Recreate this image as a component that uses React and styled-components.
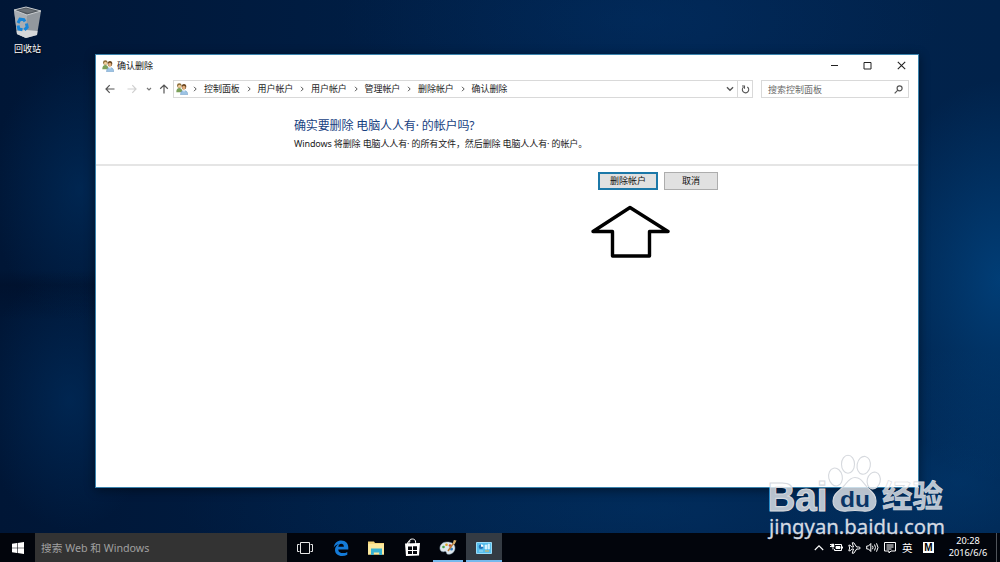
import React from "react";
import styled, { createGlobalStyle } from "styled-components";

const GlobalStyle = createGlobalStyle`
  * {
    box-sizing: border-box;
  }

  body {
    margin: 0;
    overflow: hidden;
    font-family: "Noto Sans", "Noto Sans CJK SC", sans-serif;
    font-size: 9px;
  }

  svg {
    display: block;
    flex: none;
  }
`;

const Screen = styled.div`
  position: relative;
  width: 1000px;
  height: 562px;
  display: flex;
  flex-direction: column;
  overflow: hidden;
  background:
    linear-gradient(180deg, transparent 270px, rgba(0, 8, 28, 0.3) 285px, transparent 320px) 0 0 / 95px 100% no-repeat,
    radial-gradient(ellipse 130px 200px at 1000px 280px, rgba(0, 84, 154, 0.55), transparent),
    radial-gradient(ellipse 200px 130px at 960px 480px, rgba(0, 66, 126, 0.45), transparent),
    radial-gradient(ellipse 460px 90px at 640px 510px, rgba(0, 58, 112, 0.4), transparent),
    radial-gradient(ellipse 300px 110px at 640px 20px, rgba(0, 52, 108, 0.4), transparent),
    radial-gradient(ellipse 90px 130px at 80px 190px, rgba(0, 52, 104, 0.5), transparent),
    radial-gradient(ellipse 90px 130px at 70px 400px, rgba(0, 52, 105, 0.5), transparent),
    linear-gradient(90deg, #001636 0%, #001c41 30%, #01234e 70%, #01224a 100%);
`;

const Desktop = styled.main`
  flex: 1;
  display: flex;
  align-items: flex-start;
`;

const DesktopIcon = styled.div`
  width: 55px;
  margin-right: 40px;
  padding-top: 6px;
  display: flex;
  flex-direction: column;
  align-items: center;
  gap: 4px;
  color: #fff;
  line-height: 12px;
  text-shadow: 0 1px 2px #000;
`;

const Window = styled.section`
  width: 824px;
  height: 434px;
  margin-top: 54px;
  display: flex;
  flex-direction: column;
  background: #fff;
  border: 1px solid #3b83ad;
  box-shadow: 0 2px 10px rgba(0, 0, 0, 0.45);
`;

const TitleBar = styled.header`
  height: 21px;
  padding-left: 6px;
  display: flex;
  align-items: center;
  justify-content: space-between;
`;

const Title = styled.div`
  display: flex;
  align-items: center;
  gap: 3px;
  color: #111;
`;

const WindowControls = styled.div`
  display: flex;
`;

const ControlButton = styled.div`
  width: 33.4px;
  display: flex;
  justify-content: center;
`;

const NavRow = styled.nav`
  height: 26px;
  padding: 0 9px 0 8px;
  display: flex;
  align-items: center;
`;

const NavArrows = styled.div`
  width: 69px;
`;

const AddressBar = styled.div`
  width: 580px;
  height: 18px;
  padding-left: 2px;
  display: flex;
  align-items: center;
  border: 1px solid #d9d9d9;
`;

const Crumb = styled.span`
  width: 53.5px;
  display: flex;
  align-items: center;
  line-height: 14px;
  letter-spacing: -0.05px;
  white-space: nowrap;
  color: #1c1c1c;

  svg {
    margin: 0 6px 0 4px;
  }
`;

const AddressButton = styled.div`
  width: ${(props) => props.$width};
  height: 100%;
  margin-left: ${(props) => (props.$push ? "auto" : "0")};
  display: flex;
  align-items: center;
  justify-content: center;
  border-left: ${(props) => (props.$divided ? "1px solid #d9d9d9" : "none")};
`;

const SearchField = styled.div`
  flex: 1;
  height: 18px;
  margin-left: 8px;
  padding: 0 5px 0 6px;
  display: flex;
  align-items: center;
  justify-content: space-between;
  border: 1px solid #d9d9d9;
  color: #6b6b6b;
`;

const Message = styled.div`
  height: 64px;
  padding: 15px 0 0 198px;
  border-bottom: 2px solid #e5e5e5;
`;

const Heading = styled.h1`
  margin: 0;
  font-size: 12px;
  font-weight: 400;
  line-height: 18px;
  letter-spacing: -0.13px;
  color: #17417f;
`;

const Description = styled.p`
  margin: 1px 0 0;
  line-height: 16px;
  letter-spacing: -0.12px;
  color: #1a1a1a;
`;

const Actions = styled.div`
  padding: 6px 0 0 502px;
  display: flex;
  gap: 6px;
`;

const Button = styled.button`
  width: ${(props) => (props.$primary ? "60px" : "54px")};
  height: 18px;
  padding: 0;
  font: inherit;
  line-height: 12px;
  color: #111;
  background: #e1e1e1;
  border: ${(props) => (props.$primary ? "2px solid #1c78a8" : "1px solid #adadad")};
`;

const Pointer = styled.div`
  padding: 14px 0 0 493px;
`;

const Taskbar = styled.footer`
  height: 29px;
  display: flex;
  background: #02050c;
  color: #fff;
`;

const StartButton = styled.div`
  width: 35px;
  display: flex;
  align-items: center;
  justify-content: center;
`;

const TaskSearch = styled.div`
  width: 252px;
  padding-left: 6px;
  display: flex;
  align-items: center;
  font-size: 10.7px;
  color: #a0a0a0;
  background: #333;
`;

const Task = styled.div`
  width: 35.8px;
  display: flex;
  align-items: center;
  justify-content: center;
  background: ${(props) => (props.$active ? "#343b43" : "transparent")};
  box-shadow: ${(props) => (props.$active ? "inset 0 -2px #76b9ed" : "none")};
`;

const OpenTask = styled(Task)`
  background: linear-gradient(#76b9ed, #76b9ed) center bottom / 30px 2px no-repeat;
`;

const Tray = styled.div`
  margin-left: auto;
  display: flex;
  align-items: center;
`;

const TrayItem = styled.div`
  width: 17.6px;
  display: flex;
  justify-content: center;
  font-size: 10.5px;
  line-height: 14px;
`;

const ImeBadge = styled.div`
  width: 11px;
  height: 11px;
  margin: 0 14px 0 7px;
  background: #fff;
  color: #000;
  font: bold 10px/11px "Liberation Sans", sans-serif;
  text-align: center;
`;

const Clock = styled.div`
  width: 40px;
  margin-right: 8px;
  padding-bottom: 1px;
  font-size: 9.2px;
  line-height: 12.5px;
  text-align: center;
  white-space: nowrap;
`;

const ShowDesktop = styled.div`
  width: 4px;
  height: 100%;
  border-left: 1px solid #50545a;
`;

const Watermark = styled.svg`
  position: absolute;
  left: 750px;
  top: 440px;
`;

const crumbs = ["控制面板", "用户帐户", "用户帐户", "管理帐户", "删除帐户", "确认删除"];

function UsersIcon({ size }) {
  return (
    <svg width={size} height={size} viewBox="0 0 12 12">
      <path d="M.3 9.300c0-3 1.200-4.200 3-4.200s3 1.200 3 4.200z" fill="#7ba05a" />
      <circle cx="3.300" cy="2.600" r="2.300" fill="#8b6a34" />
      <circle cx="3.500" cy="3.300" r="1.500" fill="#f0cf9d" />
      <path d="M4.500 11.800c0-3 1.500-4.200 3.600-4.200s3.700 1.200 3.700 4.200z" fill="#9cc3e4" stroke="#5b8bb8" strokeWidth=".4" />
      <ellipse cx="8" cy="3.700" rx="2.300" ry="2.600" fill="#6a4722" />
      <ellipse cx="7.800" cy="4.800" rx="1.700" ry="2" fill="#e2ae7c" />
      <path d="M7 7.300l1 1.600 1-1.600z" fill="#fff" />
    </svg>
  );
}

function Chevron({ down, color = "#555", size = 6 }) {
  return (
    <svg width={size} height={size} viewBox="0 0 6 6" fill="none" stroke={color} strokeWidth="1">
      <path d={down ? "M.7 1.700L3 4l2.300-2.300" : "M2 .8L4.200 3 2 5.200"} />
    </svg>
  );
}

function RecycleBin() {
  return (
    <svg width="30" height="33" viewBox="0 0 30 33">
      <path d="M1 4l3 24 9 4 11-3 4-24z" fill="#92989e" />
      <path d="M1 4l3 24 9 4 1-23z" fill="#a9aeb3" />
      <path d="M3.700 25l.3 3 9 4 11-3 .5-4-11-1z" fill="#d6d8da" />
      <path d="M1 4l12-3 15 4-14 4z" fill="#50575d" stroke="#c9cdd0" strokeWidth="1" />
      <path d="M5 4.200l8-1.800 10 2.700-8 2z" fill="#6b7177" />
      <g fill="none" stroke="#1685d8" strokeWidth="3">
        <path d="M5 17l2-3.800 3.800.4 1.200 2" />
        <path d="M13.400 17.500l.8 3.700-2.700 2.600" />
        <path d="M9.500 23.800l-3.700-.8-.7-3.500" />
      </g>
    </svg>
  );
}

function NavigationArrows() {
  return (
    <svg width="69" height="14" viewBox="0 0 69 14" fill="none" stroke="#555" strokeWidth="1.200">
      <path d="M10.500 7H2M5.700 3.200L2 7l3.700 3.800" />
      <path d="M23.500 7H32M28.300 3.200L32 7l-3.700 3.800" stroke="#d0d0d0" />
      <path d="M43 6l2 2 2-2" stroke="#777" />
      <path d="M60 11.500V3M56.200 6.700L60 3l3.800 3.700" />
    </svg>
  );
}

function BaiduWatermark() {
  return (
    <Watermark width="250" height="105" viewBox="0 0 250 105">
      <g fill="#fff" fillOpacity=".72" stroke="#d6d9de" strokeWidth="1.100">
        <ellipse cx="85.500" cy="37" rx="6.800" ry="9" transform="rotate(-12 85.500 37)" />
        <ellipse cx="98" cy="24.300" rx="6.500" ry="9" />
        <ellipse cx="113.700" cy="25.300" rx="6.600" ry="9" transform="rotate(10 113.700 25.300)" />
        <ellipse cx="123.700" cy="40.500" rx="6.500" ry="8.500" transform="rotate(14 123.700 40.500)" />
        <path d="M105 37.500c6 0 8 5 12 9.500s9 7 9 14c0 8-6 11-13 10-5-.7-11-.7-16 0-7 1-14-2-14-10 0-7 6-10 10-14s6-9.500 12-9.500z" />
        <text x="17.500" y="71" fontFamily="Liberation Sans, sans-serif" fontWeight="700" fontSize="41" textLength="60" lengthAdjust="spacingAndGlyphs">Bai</text>
        <text x="132" y="67" fontFamily="Noto Sans CJK SC, sans-serif" fontWeight="700" fontSize="31" textLength="61" lengthAdjust="spacingAndGlyphs" strokeWidth=".6">经验</text>
      </g>
      <text x="90" y="67" fontFamily="Liberation Sans, sans-serif" fontWeight="700" fontSize="22" textLength="30" lengthAdjust="spacingAndGlyphs" fill="#0a3566">du</text>
      <text x="19" y="94" fontFamily="Noto Sans, sans-serif" fontSize="20.500" textLength="176" lengthAdjust="spacingAndGlyphs" fill="#d4dae2" stroke="#d4dae2" strokeWidth=".3">jingyan.baidu.com</text>
    </Watermark>
  );
}

function TaskbarApps() {
  return (
    <>
      <Task>
        <svg width="16" height="12" viewBox="0 0 16 12" fill="none" stroke="#e6e6e6">
          <path d="M3.500.5h9v11h-9zM2.500 2.500h-2v7h2M13.500 2.500h2v7h-2" />
        </svg>
      </Task>
      <Task>
        <svg width="16" height="16" viewBox="0 0 16 16">
          <path d="M.7 7.500C1.400 3 4.500.5 8.300.5c4.500 0 7 3.100 7 7v1.900H5.200c.1 2.700 2.300 3.700 4.800 3.700 1.600 0 3-.4 4.300-1.200v2.900c-1.500.8-3.300 1.200-5.100 1.200-4.300 0-7.200-2.400-7.200-6 0-2.800 1.500-5 4-6.100C3.700 4.400 2 5.500.7 7.500zm4.600-.8h5.600c0-2-1-3-2.700-3-1.500 0-2.600 1.100-2.900 3z" fill="#147bd8" />
        </svg>
      </Task>
      <Task>
        <svg width="16" height="14" viewBox="0 0 16 14">
          <path d="M0 .5h6l1 1.500h9v11.500H0z" fill="#f5d77b" />
          <path d="M0 3h16v10.500H0z" fill="#fbe99e" />
          <path d="M3 7.500h11V14h-2.800v-2.500H5.800V14H3z" fill="#37b3d4" />
        </svg>
      </Task>
      <Task>
        <svg width="17" height="19" viewBox="0 0 17 19">
          <path d="M5 6V4.200C5 2 6.200 1 8.300 1s3.300 1 3.300 3.200V6M3.500 6c0-2 1-3 3-3" fill="none" stroke="#fff" strokeWidth="1" />
          <path d="M1 5.500l15-.5-1 12.500L2 18z" fill="#fff" />
          <path d="M4 8.500h4V12H4zM9 8.300h4V12H9zM4 13h4v3H4zM9 13h4v3H9z" fill="#05070c" />
        </svg>
      </Task>
      <OpenTask>
        <svg width="18" height="17" viewBox="0 0 18 17">
          <path d="M8 3C3 3 .5 6.500 1 10c.5 3 3.500 3 4.500 2.500s2 .5 2 1.500c.3 2.500 8.500 1.500 8.500-5 0-4-3.500-6-8-6z" fill="#dce6ed" stroke="#8ca5b5" strokeWidth=".5" />
          <circle cx="4.500" cy="8" r="1.300" fill="#48a44b" />
          <circle cx="7.500" cy="5.700" r="1.300" fill="#e0a524" />
          <circle cx="11" cy="6.500" r="1.300" fill="#c6462d" />
          <circle cx="12.500" cy="10" r="1.500" fill="#347fc1" />
          <path d="M9 12l7-10" stroke="#b87a36" strokeWidth="1.500" />
          <path d="M14 4.500l.8-3.500 2.700.5-2 4z" fill="#d9b16c" />
        </svg>
      </OpenTask>
      <Task $active>
        <svg width="16" height="12" viewBox="0 0 16 12">
          <path d="M.5.5h15v11H.5z" fill="#56bdec" stroke="#99dcf8" />
          <circle cx="5" cy="4.800" r="2.300" fill="#2472b5" />
          <path d="M5 4.800V2.300a2.500 2.500 0 0 1 2.500 2.500z" fill="#fff" />
          <path d="M9 3h2v4H9zM12 2h1.500v5H12zM3 9h4" fill="#d8f2fc" stroke="#d8f2fc" strokeWidth=".6" />
          <path d="M9 9h4" stroke="#e7b34a" />
        </svg>
      </Task>
    </>
  );
}

function SystemTray() {
  return (
    <Tray>
      <TrayItem>
        <svg width="10" height="8" viewBox="0 0 10 8" fill="none" stroke="#fff" strokeWidth="1.100">
          <path d="M.8 6L5 1.800 9.200 6" />
        </svg>
      </TrayItem>
      <TrayItem>
        <svg width="13" height="9" viewBox="0 0 13 9" fill="none" stroke="#fff">
          <path d="M5 1.500h6.500v6h-7V6" />
          <path d="M6 3.500h4v2H6z" fill="#fff" />
          <path d="M12.500 3.500v2M0 1.500h1.500M0 3.500h1.500M3 4.500v2" />
          <path d="M1.500 1h2.500v3H1.500z" fill="#fff" strokeWidth=".5" />
        </svg>
      </TrayItem>
      <TrayItem>
        <svg width="13" height="12" viewBox="0 0 13 12" fill="none" stroke="#fff" strokeLinejoin="round">
          <path d="M.8 3.200h1.400L3.800 5h1.700L4.200.8h1.600L8.700 5h2.100c1.900 0 1.900 2 0 2H8.700l-2.900 4.200H4.200L5.500 7H3.800L2.200 8.800H.8L1.700 6z" />
        </svg>
      </TrayItem>
      <TrayItem>
        <svg width="13" height="11" viewBox="0 0 13 11" fill="none" stroke="#fff">
          <path d="M.7 4h1.800l2.300-2.500v8L2.500 7H.7zM6.500 3.800q1 1.700 0 3.400M8.500 2.500q2 3 0 6M10.500 1.300q3 4.200 0 8.400" />
        </svg>
      </TrayItem>
      <TrayItem>
        <svg width="12" height="12" viewBox="0 0 12 12" fill="none" stroke="#fff">
          <path d="M.5.5h11v8.500H7L5 11V9H.5zM2.500 3h7M2.500 5h7M2.500 7h5" />
        </svg>
      </TrayItem>
      <TrayItem>英</TrayItem>
      <ImeBadge>M</ImeBadge>
      <Clock>
        20:28
        <br />
        2016/6/6
      </Clock>
      <ShowDesktop />
    </Tray>
  );
}

export default function App() {
  return (
    <Screen>
      <GlobalStyle />
      <Desktop>
        <DesktopIcon>
          <RecycleBin />
          回收站
        </DesktopIcon>
        <Window>
          <TitleBar>
            <Title>
              <UsersIcon size={12} />
              确认删除
            </Title>
            <WindowControls>
              <ControlButton>
                <svg width="9" height="9" stroke="#222">
                  <path d="M1 4.500h7" />
                </svg>
              </ControlButton>
              <ControlButton>
                <svg width="9" height="9" fill="none" stroke="#222">
                  <path d="M1 1.500h7v6.500H1z" />
                </svg>
              </ControlButton>
              <ControlButton>
                <svg width="9" height="9" stroke="#222" strokeWidth="1.100">
                  <path d="M.8.800l7.400 7.400M8.200.800L.8 8.200" />
                </svg>
              </ControlButton>
            </WindowControls>
          </TitleBar>
          <NavRow>
            <NavArrows>
              <NavigationArrows />
            </NavArrows>
            <AddressBar>
              <UsersIcon size={12} />
              {crumbs.map((label, index) => (
                <Crumb key={index}>
                  <Chevron />
                  {label}
                </Crumb>
              ))}
              <AddressButton $width="14px" $push>
                <Chevron down size={8} />
              </AddressButton>
              <AddressButton $width="15px" $divided>
                <svg width="9" height="9" viewBox="0 0 9 9" fill="none" stroke="#555" strokeWidth="1.100">
                  <path d="M6.300 2A3.200 3.200 0 1 1 2.500 2.200M1 1h2.500v2.700" />
                </svg>
              </AddressButton>
            </AddressBar>
            <SearchField>
              搜索控制面板
              <svg width="9" height="9" viewBox="0 0 9 9" fill="none" stroke="#555" strokeWidth="1.200">
                <circle cx="5.600" cy="3.300" r="2.500" />
                <path d="M3.800 5.200L.7 8.300" />
              </svg>
            </SearchField>
          </NavRow>
          <Message>
            <Heading>确实要删除 电脑人人有· 的帐户吗?</Heading>
            <Description>Windows 将删除 电脑人人有· 的所有文件，然后删除 电脑人人有· 的帐户。</Description>
          </Message>
          <Actions>
            <Button $primary>删除帐户</Button>
            <Button>取消</Button>
          </Actions>
          <Pointer>
            <svg width="82" height="56" viewBox="0 0 82 56" fill="none" stroke="#000" strokeWidth="3.400" strokeLinejoin="round">
              <path d="M41 3.500L79 27.500H60.500V52h-37V27.500H4z" />
            </svg>
          </Pointer>
        </Window>
      </Desktop>
      <Taskbar>
        <StartButton>
          <svg width="12" height="12" viewBox="0 0 12 12" fill="#fff">
            <path d="M0 1.700l5-.7v4.700H0zM5.600.9L12 0v5.700H5.600zM0 6.300h5V11l-5-.7zM5.600 6.300H12V12l-6.400-.9z" />
          </svg>
        </StartButton>
        <TaskSearch>搜索 Web 和 Windows</TaskSearch>
        <TaskbarApps />
        <SystemTray />
      </Taskbar>
      <BaiduWatermark />
    </Screen>
  );
}
